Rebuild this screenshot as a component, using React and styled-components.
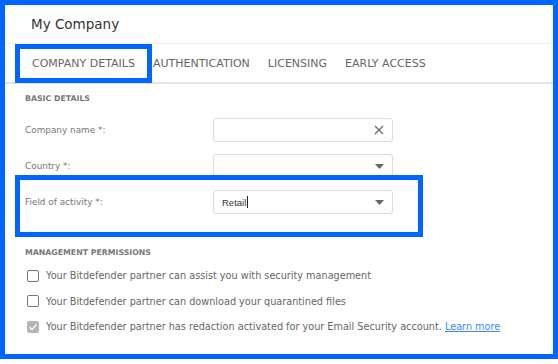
import styled, { createGlobalStyle } from "styled-components"

const GlobalStyle = createGlobalStyle`
  body {
    margin: 0;
    background: #fff;
    font-family: "DejaVu Sans", "Open Sans", sans-serif;
  }
`

const tabs = ["Company details", "Authentication", "Licensing", "Early access"]

const permissions = [
  { text: "Your Bitdefender partner can assist you with security management" },
  { text: "Your Bitdefender partner can download your quarantined files" },
  { text: "Your Bitdefender partner has redaction activated for your Email Security account.", checked: true, link: "Learn more" }
]

function CloseIcon() {
  return <svg width="10" height="10" viewBox="0 0 10 10">
    <path d="M1 1L9 9M9 1L1 9" stroke="#666" strokeWidth="1.2" fill="none" />
  </svg>
}

function Caret() {
  return <svg width="9" height="5" viewBox="0 0 9 5">
    <path d="M0 0H9L4.5 5Z" fill="#666" />
  </svg>
}

function Check() {
  return <svg width="10" height="10" viewBox="0 0 10 10">
    <path d="M1.5 5.2L4 7.6L8.6 2.4" stroke="#fff" strokeWidth="1.4" fill="none" />
  </svg>
}

export default function App() {
  return <>
    <GlobalStyle />
    <Frame>
      <Header>My Company</Header>
      <TabBar>
        {tabs.map((t) => <Tab key={t}>{t}</Tab>)}
      </TabBar>
      <Body>
        <SectionTitle>Basic details</SectionTitle>
        <FormRow>
          <Label>Company name *:</Label>
          <Field>
            <span />
            <CloseIcon />
          </Field>
        </FormRow>
        <FormRow>
          <Label>Country *:</Label>
          <Field>
            <span />
            <Caret />
          </Field>
        </FormRow>
        <FormRow>
          <Label>Field of activity *:</Label>
          <Field>
            <Value>Retail<Cursor /></Value>
            <Caret />
          </Field>
        </FormRow>

        <SectionTitle $top={33} $bottom={10}>Management permissions</SectionTitle>
        {permissions.map((p) => <CheckRow key={p.text}>
          <Box $checked={p.checked}>{p.checked && <Check />}</Box>
          <span>
            {p.text}
            {p.link && <> <Link href="#">{p.link}</Link></>}
          </span>
        </CheckRow>)}
      </Body>

      <Highlight style={{ left: 10, top: 39, width: 137, height: 39 }} />
      <Highlight style={{ left: 10, top: 170, width: 408, height: 62 }} />
    </Frame>
  </>
}

const Frame = styled.div`
  position: relative;
  box-sizing: border-box;
  width: 558px;
  height: 359px;
  border: 5px solid #0066ff;
  background: #fff;
`

const Header = styled.div`
  height: 39px;
  box-sizing: border-box;
  padding-left: 26px;
  display: flex;
  align-items: center;
  font-size: 13.5px;
  color: #333;
  border-bottom: 1px solid #ececec;
`

const TabBar = styled.div`
  display: flex;
  height: 38px;
  padding-left: 18px;
  border-bottom: 2px solid #e4e4e4;
`

const Tab = styled.div`
  display: flex;
  align-items: center;
  padding: 0 9px;
  font-size: 11px;
  text-transform: uppercase;
  color: #666;
`

const Body = styled.div`
  padding: 0 20px;
`

const SectionTitle = styled.div`
  margin-top: ${(p) => p.$top ?? 9}px;
  margin-bottom: ${(p) => p.$bottom ?? 13}px;
  height: 12px;
  line-height: 12px;
  font-size: 7.8px;
  font-weight: bold;
  text-transform: uppercase;
  color: #777;
`

const FormRow = styled.div`
  display: grid;
  grid-template-columns: 188px 180px;
  align-items: center;
  height: 24px;
  margin-bottom: 12px;
`

const Label = styled.div`
  font-size: 8.9px;
  color: #777;
`

const Field = styled.div`
  box-sizing: border-box;
  height: 24px;
  border: 1px solid #dcdcdc;
  border-radius: 3px;
  display: flex;
  align-items: center;
  justify-content: space-between;
  padding: 0 8px 0 8px;
`

const Value = styled.span`
  display: flex;
  align-items: center;
  font-family: "Liberation Sans", sans-serif;
  font-size: 9.5px;
  color: #333;
`

const Cursor = styled.i`
  display: inline-block;
  width: 1px;
  height: 12px;
  margin-left: 1px;
  background: #222;
`

const CheckRow = styled.div`
  display: flex;
  align-items: center;
  gap: 7px;
  height: 13px;
  margin-bottom: 12.5px;
  padding-left: 2px;
  font-size: 9.7px;
  color: #666;
  white-space: nowrap;
`

const Box = styled.span`
  box-sizing: border-box;
  width: 12px;
  height: 12px;
  flex: none;
  border-radius: 2px;
  border: 1px solid ${(p) => (p.$checked ? "#b5b5b5" : "#777")};
  background: ${(p) => (p.$checked ? "#b5b5b5" : "#fff")};
  display: flex;
  align-items: center;
  justify-content: center;
`

const Link = styled.a`
  color: #3d8af7;
  text-decoration: underline;
`

const Highlight = styled.div`
  position: absolute;
  box-sizing: border-box;
  border: 5px solid #0066ff;
  pointer-events: none;
`
